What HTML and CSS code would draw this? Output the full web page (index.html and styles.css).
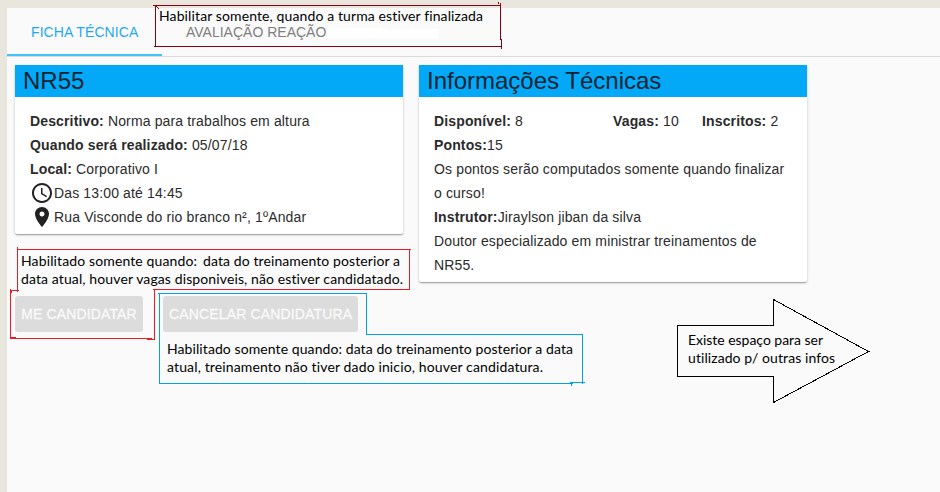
FILE: index.html
```html
<!DOCTYPE html>
<html lang="pt-BR">
<head>
<meta charset="utf-8">
<title>Ficha Técnica</title>
<link rel="stylesheet" href="styles.css">
</head>
<body>
<main class="panel">
  <nav class="tabs">
    <a class="tab tab-active">FICHA TÉCNICA</a>
    <a class="tab">AVALIAÇÃO REAÇÃO</a>
  </nav>
  <section class="cards">
    <article class="card">
      <h2 class="card-title">NR55</h2>
      <div class="card-body">
        <p><b>Descritivo:</b> Norma para trabalhos em altura</p>
        <p><b>Quando será realizado:</b> 05/07/18</p>
        <p><b>Local:</b> Corporativo I</p>
        <p class="icon-row"><svg class="icon" viewBox="0 0 24 24"><path d="M11.99 2C6.47 2 2 6.48 2 12s4.47 10 9.99 10C17.52 22 22 17.52 22 12S17.52 2 11.99 2zM12 20c-4.42 0-8-3.58-8-8s3.58-8 8-8 8 3.58 8 8-3.58 8-8 8z"/><path d="M12.5 7H11v6l5.25 3.15.75-1.23-4.5-2.67z"/></svg>Das 13:00 até 14:45</p>
        <p class="icon-row"><svg class="icon" viewBox="0 0 24 24"><path d="M12 2C8.13 2 5 5.13 5 9c0 5.25 7 13 7 13s7-7.75 7-13c0-3.870-3.130-7-7-7zm0 9.500c-1.380 0-2.500-1.120-2.500-2.500s1.120-2.500 2.500-2.500 2.500 1.120 2.500 2.500-1.120 2.500-2.500 2.500z"/></svg>Rua Visconde do rio branco n², 1ºAndar</p>
      </div>
    </article>
    <article class="card">
      <h2 class="card-title">Informações Técnicas</h2>
      <div class="card-body">
        <div class="stats"><p><b>Disponível:</b> 8</p><p><b>Vagas:</b> 10</p><p><b>Inscritos:</b> 2</p></div>
        <p><b>Pontos:</b>15</p>
        <p>Os pontos serão computados somente quando finalizar<br>o curso!</p>
        <p><b>Instrutor:</b>Jiraylson jiban da silva</p>
        <p>Doutor especializado em ministrar treinamentos de<br>NR55.</p>
      </div>
    </article>
  </section>
  <div class="actions">
    <button class="btn btn-apply" disabled>ME CANDIDATAR</button>
    <button class="btn btn-cancel" disabled>CANCELAR CANDIDATURA</button>
  </div>
</main>
<svg class="notes" viewBox="0 0 940 492">
  <path class="smudge" d="M328 28h54v1h56v9h-110z"/>
  <g class="line line-wine">
    <path d="M153 5.500H501M155.500 5V47M154 46.500H502M500.500 3V40M501.500 39V49M498.500 2V4M156 6l3 3"/>
  </g>
  <g class="line line-red">
    <path d="M17.500 247V292M17 249.500H411M409.500 249V290M153 289.500H410M154.500 289V340M147 339.500H155M10 338.500H152M10 337.500H16M10.500 289V339M10 290.500H19M11.500 290V293"/>
  </g>
  <g class="line line-blue">
    <path d="M158 293.500H367M366.500 293V335M366 334.500H583M582.500 334V384M570 382.500H585M159 383.500H573M571.500 383V386M159.500 293V384"/>
  </g>
  <path class="line line-black" d="M677.500 325.500H773.500V299.500L868.500 351.500L773.500 402.500V376.500H677.500z"/>
  <g class="note-text">
    <text x="159" y="21" textLength="324">Habilitar somente, quando a turma estiver finalizada</text>
    <text x="21" y="266" textLength="176">Habilitado somente quando:</text>
    <text x="203" y="266" textLength="197">data do treinamento posterior a</text>
    <text x="21" y="284" textLength="382">data atual, houver vagas disponiveis, não estiver candidatado.</text>
    <text x="167" y="354" textLength="406">Habilitado somente quando: data do treinamento posterior a data</text>
    <text x="167" y="372" textLength="376">atual, treinamento não tiver dado inicio, houver candidatura.</text>
    <text x="688" y="345" textLength="135">Existe espaço para ser</text>
    <text x="688" y="363" textLength="147">utilizado p/ outras infos</text>
  </g>
</svg>
</body>
</html>
```
FILE: styles.css
```css
* { box-sizing: border-box; }
body {
  margin: 0;
  padding: 8px 0 0 7px;
  height: 492px;
  overflow: hidden;
  background: #e9e6de;
  font: 14px/24px "Liberation Sans", Arial, sans-serif;
  color: #2b2b2b;
}
.panel { height: 484px; background: #fafafa; }
.tabs { display: flex; height: 49px; border-bottom: 1px solid #dadada; }
.tab { height: 48px; padding: 0 24px; line-height: 48px; color: #7f7f7f; white-space: nowrap; }
.tab-active { width: 155px; color: #1fa9f0; border-bottom: 2px solid #40c4ff; letter-spacing: .08px; }
.cards { display: flex; align-items: flex-start; gap: 16px; padding: 8px 8px 0; }
.card {
  width: 388px;
  background: #fff;
  border-radius: 2px;
  box-shadow: 0 1px 3px rgba(0,0,0,.2), 0 1px 1px rgba(0,0,0,.14), 0 2px 1px -1px rgba(0,0,0,.12);
}
.card-title {
  margin: 0;
  height: 32px;
  padding-left: 8px;
  background: #03a9f6;
  color: #052433;
  font-size: 24px;
  font-weight: 400;
  line-height: 32px;
}
.card-body { padding: 12px 15px 5px; letter-spacing: .14px; }
.card-body p { margin: 0; white-space: nowrap; }
.icon-row { display: flex; }
.icon { width: 24px; height: 24px; fill: #212121; }
.stats { display: grid; grid-template-columns: 179px 89px auto; }
.actions { display: flex; gap: 20px; margin-top: 14px; padding-left: 8px; }
.btn {
  height: 36px;
  padding: 0 6px;
  border: 0;
  border-radius: 3px;
  background: #dcdcdc;
  color: #fafafa;
  font: 14px/36px "Liberation Sans", Arial, sans-serif;
  letter-spacing: .14px;
  white-space: nowrap;
  -webkit-text-stroke: .3px #fafafa;
}
.btn-apply { width: 128px; }
.btn-cancel { width: 195px; letter-spacing: .15px; }
.notes { position: absolute; left: 0; top: 0; width: 940px; height: 492px; pointer-events: none; }
.smudge { fill: #fff; }
.line { fill: none; stroke-width: 1; shape-rendering: crispEdges; }
.line-wine { stroke: #880015; }
.line-red { stroke: #ed1c24; }
.line-blue { stroke: #00a2e8; }
.line-black { stroke: #000; }
.note-text { fill: #000; font: 14px Lato, "Noto Sans", sans-serif; font-variant-ligatures: none; }
```
